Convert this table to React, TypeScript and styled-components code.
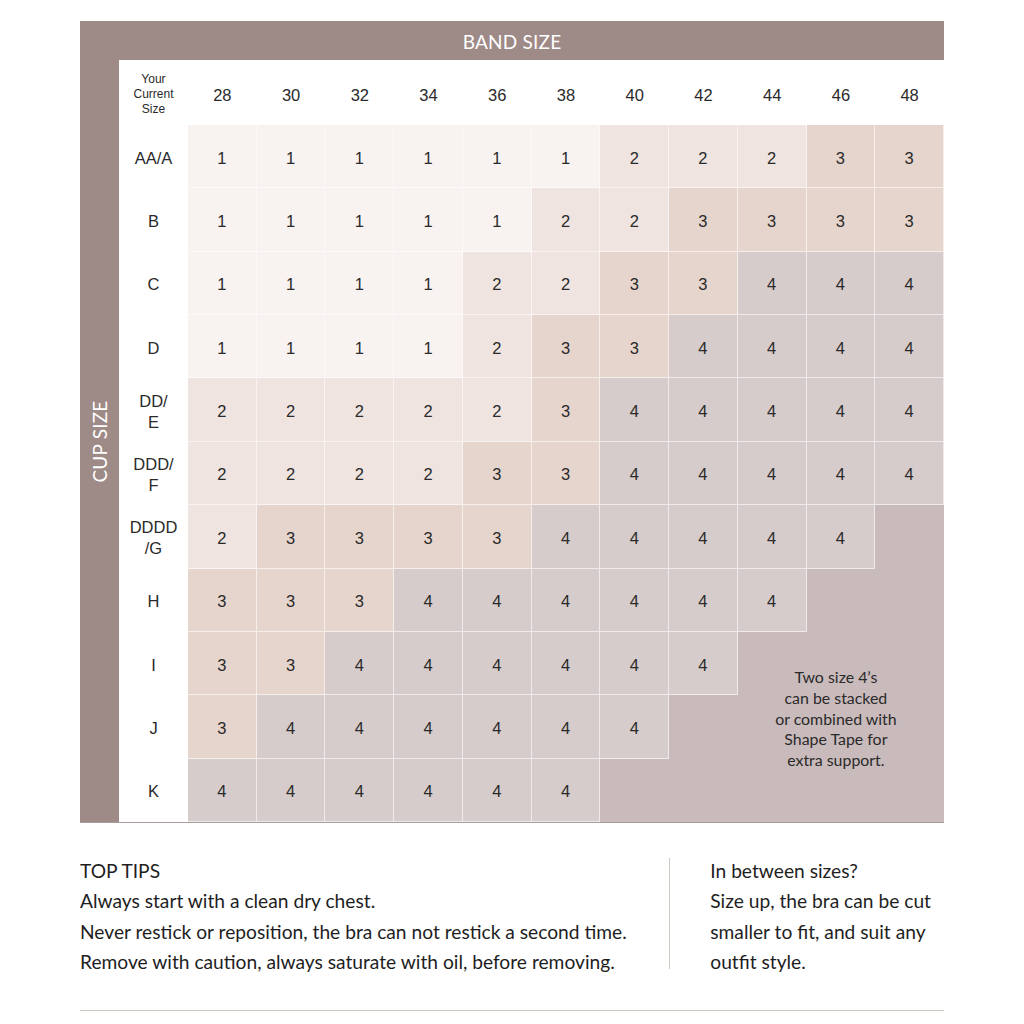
import React from "react";
import styled, { createGlobalStyle } from "styled-components";

const GlobalStyle = createGlobalStyle`
  html, body { margin: 0; padding: 0; background: #ffffff; }
  body { font-family: "Lato", "Liberation Sans", sans-serif; color: #222; }
  * { box-sizing: border-box; }
`;

const BAND = "#9e8a86";
const EMPTY = "#c9babb";
const LEVEL_COLORS: Record<number, string> = {
  1: "#f8f2f1",
  2: "#efe4e0",
  3: "#e6d5cd",
  4: "#d6cccc",
};

const Page = styled.div`
  width: 864px;
  margin: 21px 0 0 80px;
`;

const Chart = styled.section`
  display: grid;
  grid-template-columns: 39px 1fr;
  grid-template-rows: 39px 762px;
  border-bottom: 1px solid #a99d9b;
`;

const BandHeader = styled.div`
  grid-column: 1 / 3;
  background: ${BAND};
  color: #fff;
  display: flex;
  align-items: center;
  justify-content: center;
  font-family: "Lato", sans-serif;
  font-size: 19px;
  letter-spacing: 0.2px;
  padding-top: 2px;
`;

const CupSide = styled.div`
  background: ${BAND};
  display: flex;
  align-items: center;
  justify-content: center;
`;

const CupLabel = styled.span`
  color: #fff;
  font-family: "Lato", sans-serif;
  font-size: 19px;
  letter-spacing: 0.2px;
  white-space: nowrap;
  transform: rotate(-90deg);
`;

const Table = styled.div`
  display: grid;
  grid-template-columns: 69px repeat(11, 1fr);
  grid-template-rows: 65px repeat(11, 1fr);
  background: ${EMPTY};
  font-family: "Liberation Sans", sans-serif;
  color: #2a2a2a;
`;

const Corner = styled.div`
  background: #fff;
  display: flex;
  align-items: center;
  justify-content: center;
  text-align: center;
  font-size: 12px;
  line-height: 15px;
  padding-top: 4px;
`;

const HeadCell = styled.div`
  background: #fff;
  display: flex;
  align-items: center;
  justify-content: center;
  font-size: 16.5px;
  padding-top: 6px;
`;

const RowLabel = styled.div`
  background: #fff;
  display: flex;
  align-items: center;
  justify-content: center;
  text-align: center;
  font-size: 16.5px;
  line-height: 21px;
  padding-top: 3px;
`;

const Cell = styled.div<{ $level: number }>`
  background: ${(p) => (p.$level ? LEVEL_COLORS[p.$level] : "transparent")};
  border-right: ${(p) => (p.$level ? "1px solid rgba(255,255,255,0.6)" : "none")};
  border-bottom: ${(p) => (p.$level ? "1px solid rgba(255,255,255,0.6)" : "none")};
  display: flex;
  align-items: center;
  justify-content: center;
  font-size: 16.5px;
  padding-top: 4px;
`;

const Note = styled.div`
  grid-column: 10 / 13;
  grid-row: 10 / 13;
  display: flex;
  align-items: center;
  justify-content: center;
  text-align: center;
  font-family: "Lato", sans-serif;
  font-size: 15.9px;
  line-height: 20.6px;
  color: #2a2a2a;
  padding: 0 10px 16px 0;
`;

const Tips = styled.section`
  display: flex;
  margin-top: 33px;
  padding-bottom: 33px;
  border-bottom: 1px solid #cfc8c1;
`;

const TipColumn = styled.div<{ $width: string }>`
  width: ${(p) => p.$width};
  font-size: 19.2px;
  line-height: 30.3px;
  color: #1e1e1e;
`;

const TipLine = styled.p`
  margin: 0;
`;

const Divider = styled.div`
  width: 1px;
  background: #cfc8c1;
  margin: 2px 40px 8px 0;
`;

const sizes = ["28", "30", "32", "34", "36", "38", "40", "42", "44", "46", "48"];

const rows: { label: React.ReactNode; values: number[] }[] = [
  { label: "AA/A", values: [1, 1, 1, 1, 1, 1, 2, 2, 2, 3, 3] },
  { label: "B", values: [1, 1, 1, 1, 1, 2, 2, 3, 3, 3, 3] },
  { label: "C", values: [1, 1, 1, 1, 2, 2, 3, 3, 4, 4, 4] },
  { label: "D", values: [1, 1, 1, 1, 2, 3, 3, 4, 4, 4, 4] },
  { label: <>DD/<br />E</>, values: [2, 2, 2, 2, 2, 3, 4, 4, 4, 4, 4] },
  { label: <>DDD/<br />F</>, values: [2, 2, 2, 2, 3, 3, 4, 4, 4, 4, 4] },
  { label: <>DDDD<br />/G</>, values: [2, 3, 3, 3, 3, 4, 4, 4, 4, 4, 0] },
  { label: "H", values: [3, 3, 3, 4, 4, 4, 4, 4, 4, 0, 0] },
  { label: "I", values: [3, 3, 4, 4, 4, 4, 4, 4, -1, -1, -1] },
  { label: "J", values: [3, 4, 4, 4, 4, 4, 4, 0, -1, -1, -1] },
  { label: "K", values: [4, 4, 4, 4, 4, 4, 0, 0, -1, -1, -1] },
];

export default function App() {
  return (
    <>
      <GlobalStyle />
      <Page>
        <Chart>
          <BandHeader>BAND SIZE</BandHeader>
          <CupSide>
            <CupLabel>CUP SIZE</CupLabel>
          </CupSide>
          <Table>
            <Corner>
              Your
              <br />
              Current
              <br />
              Size
            </Corner>
            {sizes.map((s) => (
              <HeadCell key={s}>{s}</HeadCell>
            ))}
            {rows.map((r, ri) => (
              <React.Fragment key={ri}>
                <RowLabel>{r.label}</RowLabel>
                {r.values.map((v, ci) =>
                  v < 0 ? null : (
                    <Cell key={ci} $level={v}>
                      {v > 0 ? v : ""}
                    </Cell>
                  )
                )}
              </React.Fragment>
            ))}
            <Note>
              Two size 4’s
              <br />
              can be stacked
              <br />
              or combined with
              <br />
              Shape Tape for
              <br />
              extra support.
            </Note>
          </Table>
        </Chart>
        <Tips>
          <TipColumn $width="590px">
            <TipLine>TOP TIPS</TipLine>
            <TipLine>Always start with a clean dry chest.</TipLine>
            <TipLine>Never restick or reposition, the bra can not restick a second time.</TipLine>
            <TipLine>Remove with caution, always saturate with oil, before removing.</TipLine>
          </TipColumn>
          <Divider />
          <TipColumn $width="234px">
            <TipLine>In between sizes?</TipLine>
            <TipLine>Size up, the bra can be cut smaller to fit, and suit any outfit style.</TipLine>
          </TipColumn>
        </Tips>
      </Page>
    </>
  );
}
